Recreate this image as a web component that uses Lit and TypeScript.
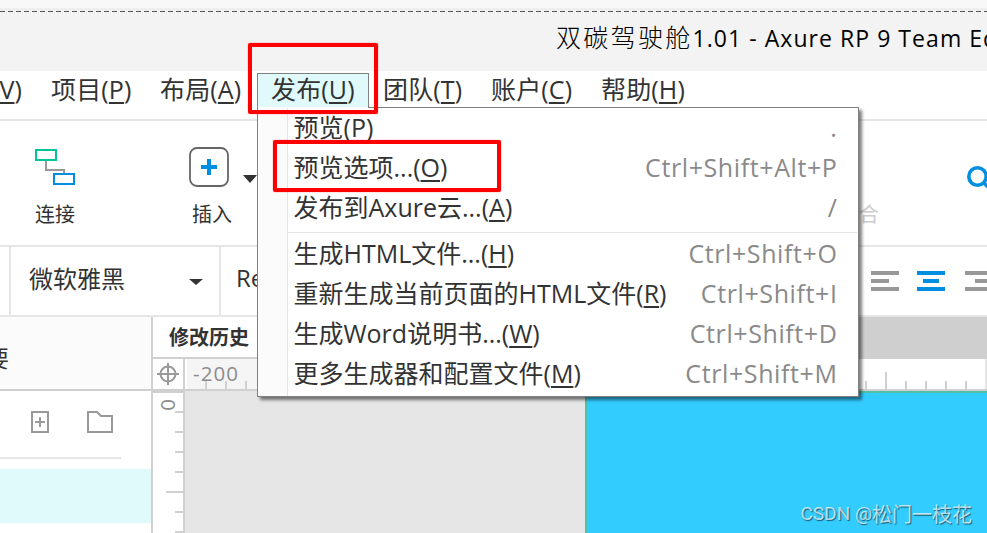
import { LitElement, html, css, svg } from "lit";
import { customElement } from "lit/decorators.js";
import { classMap } from "lit/directives/class-map.js";

interface Entry {
  label: string;
  key: string;
  shortcut: string;
}

const menuBar = [
  { label: "", key: "V" },
  { label: "项目", key: "P" },
  { label: "布局", key: "A" },
  { label: "发布", key: "U", open: true },
  { label: "团队", key: "T" },
  { label: "账户", key: "C" },
  { label: "帮助", key: "H" },
];

const groups: Entry[][] = [
  [
    { label: "预览", key: "P", shortcut: "." },
    { label: "预览选项...", key: "O", shortcut: "Ctrl+Shift+Alt+P" },
    { label: "发布到Axure云...", key: "A", shortcut: "/" },
  ],
  [
    { label: "生成HTML文件...", key: "H", shortcut: "Ctrl+Shift+O" },
    { label: "重新生成当前页面的HTML文件", key: "R", shortcut: "Ctrl+Shift+I" },
    { label: "生成Word说明书...", key: "W", shortcut: "Ctrl+Shift+D" },
    { label: "更多生成器和配置文件", key: "M", shortcut: "Ctrl+Shift+M" },
  ],
];

@customElement("publish-menu")
export class PublishMenu extends LitElement {
  static styles = css`
    :host {
      display: block;
      box-sizing: border-box;
      width: 602px;
      height: 290px;
      border: 1px solid #808080;
      background: linear-gradient(to right, #fbfbfb 29px, #e5e5e5 29px, #e5e5e5 30px, #fff 30px);
      box-shadow: 3px 3px 3px rgba(0, 0, 0, 0.5);
      padding-top: 1px;
      color: #333;
      font: 25px/36px "Open Sans", "Noto Sans CJK SC", sans-serif;
    }
    .row {
      display: flex;
      justify-content: space-between;
      height: 40px;
      padding: 0 21px 0 35.5px;
      white-space: pre;
    }
    .key {
      text-decoration: underline 2px;
      text-underline-offset: 3px;
    }
    .shortcut {
      color: #8a8a8a;
      letter-spacing: 0.6px;
      margin-right: -0.5px;
    }
    .separator {
      height: 1px;
      background: #e5e5e5;
      margin: 3px 1px 2px 30px;
    }
  `;
  render() {
    return groups.map(
      (g, i) => html`${i ? html`<div class="separator"></div>` : ""}
      ${g.map(
        (e) => html`<div class="row">
          <span>${e.label}(<span class="key">${e.key}</span>)</span><span class="shortcut">${e.shortcut}</span>
        </div>`
      )}`
    );
  }
}

@customElement("app-root")
export class AppRoot extends LitElement {
  static styles = css`
    :host {
      display: flex;
      flex-direction: column;
      position: relative;
      width: 987px;
      height: 533px;
      overflow: hidden;
      background: #fff;
      color: #333;
      white-space: nowrap;
      font-family: "Open Sans", "Noto Sans CJK SC", sans-serif;
    }
    * { box-sizing: border-box; }
    svg { display: block; }
    .strip {
      flex: none;
      height: 12px;
      background:
        repeating-linear-gradient(to right, #555 0 5px, #f3f3f3 5px 8px) 0 11px / 100% 1px no-repeat,
        linear-gradient(#f8f8f8 8px, #e9e9e9 9px, #f3f3f3 11px);
    }
    .title {
      flex: none;
      height: 59px;
      padding-left: 556px;
      background: #f3f3f3;
      color: #000;
      font-size: 23px;
      line-height: 51px;
      letter-spacing: 1.05px;
    }
    .title .name {
      font-size: 25px;
      font-weight: 300;
      letter-spacing: 2.3px;
    }
    .menubar {
      flex: none;
      display: grid;
      grid-template-columns: 61px 109px 107px 112px 108px 110px 120px;
      height: 50px;
      margin-left: -20px;
      padding-top: 2px;
      border-bottom: 2px solid #e6e6e6;
      font-size: 25px;
      line-height: 32px;
      letter-spacing: 0.15px;
    }
    .menu-item { height: 35px; padding-left: 14px; }
    .menu-item:first-child { text-align: right; padding: 0 19px 0 0; }
    .menu-item:nth-child(2) { padding-left: 10px; }
    .menu-item:nth-child(3) { padding-left: 10px; }
    .menu-item.open {
      border: 1px solid #808080;
      border-bottom: 0;
      background: #e0fafb;
      padding-left: 13px;
      line-height: 30px;
    }
    .key {
      text-decoration: underline 2px;
      text-underline-offset: 3px;
    }
    .toolbar {
      flex: none;
      display: flex;
      height: 126px;
      border-bottom: 2px solid #e6e6e6;
      padding: 26px 0 0 35px;
      font-size: 20px;
    }
    .tool { display: flex; flex-direction: column; }
    .tool .label { line-height: 28px; margin-top: 13.5px; }
    .connect { width: 154px; flex: none; }
    .insert { width: 54px; flex: none; }
    .insert .label { padding-left: 3px; }
    .drop { margin-top: 28px; flex: none; }
    .muted { color: #ccc; margin: 53.5px 0 0 602px; line-height: 28px; flex: none; }
    .search { margin: 17px 0 0 88px; flex: none; }
    .format {
      flex: none;
      display: flex;
      align-items: center;
      height: 70px;
      border-bottom: 2px solid #e6e6e6;
      padding-left: 9px;
      font-size: 24px;
    }
    .font {
      display: flex;
      align-items: center;
      justify-content: space-between;
      width: 212px;
      height: 68px;
      padding: 0 16px 7px 18px;
      border: solid #e6e6e6;
      border-width: 0 2px;
    }
    .font svg { margin-top: 9px; }
    .weight { width: 650px; padding: 0 0 7px 15px; }
    .work { flex: 1; display: flex; min-height: 0; }
    .side { width: 153px; flex: none; border-right: 2px solid #d0d0d0; }
    .side-head {
      height: 74px;
      border-bottom: 2px solid #d0d0d0;
      background: #fbfbfb;
      font-size: 23px;
      line-height: 82px;
      text-indent: -14px;
    }
    .side-tools {
      display: flex;
      gap: 37px;
      width: 121px;
      height: 68px;
      border-bottom: 2px solid #e6e6e6;
      padding: 19px 0 0 30px;
    }
    .selected { height: 54px; margin-top: 10px; background: #e0fafb; }
    .main { flex: 1; display: flex; flex-direction: column; min-width: 0; }
    .tabs { flex: none; height: 42px; background: #cfcfcf; border-bottom: 2px solid #d0d0d0; }
    .tab {
      width: 150px;
      height: 40px;
      background: #fff;
      padding-left: 16px;
      font-weight: 700;
      font-size: 20px;
      line-height: 42px;
    }
    .ruler-row { display: flex; flex: none; height: 32px; border-bottom: 2px solid #d0d0d0; }
    .corner { width: 32px; border-right: 2px solid #d0d0d0; padding: 4px 0 0 4px; }
    .ruler-top { flex: none; }
    .ruler-end { flex: 1; background: #e6e6e6; }
    .canvas-row { flex: 1; display: flex; min-height: 0; }
    .ruler-left { width: 32px; border: solid #d0d0d0; border-width: 2px 2px 0 0; }
    .canvas { flex: 1; padding-left: 400px; background: #e6e6e6; }
    .page {
      display: flex;
      align-items: flex-end;
      justify-content: flex-end;
      height: 100%;
      border: solid #50c0a8;
      border-width: 2px 0 0 2px;
      background: #3cf;
      padding: 0 15px 5px 0;
      color: rgba(255, 255, 255, 0.7);
      font: 20px/28px "Noto Sans CJK SC", sans-serif;
      text-shadow: 1px 1px 1px rgba(0, 0, 0, 0.55);
    }
    .latin { font-family: Roboto, sans-serif; font-size: 19px; white-space: pre; }
    publish-menu { position: absolute; left: 257px; top: 107px; }
    .bridge {
      position: absolute;
      left: 258px;
      top: 105px;
      width: 110px;
      height: 3px;
      background: linear-gradient(#e0fafb 2px, #fff 2px);
    }
    .mark {
      position: absolute;
      border: 4px solid #f00;
      border-radius: 2px;
      box-shadow: 0 0 1px #f00;
    }
    .mark-tab { left: 248px; top: 43px; width: 130px; height: 71px; }
    .mark-item { left: 273px; top: 140px; width: 228px; height: 52px; }
    .ruler-text { font-size: 20.5px; fill: #8c8c8c; }
  `;

  private align(x: number, w: number) {
    return svg`<path d="M${x} 0h28v4h-28zM${x + (28 - w) / 2} 8h${w}v4h-${w}zM${x} 16h28v4h-28z" fill="#008fe0"/>`;
  }

  render() {
    const topTicks = [...Array(39).keys()].map((i) => 20 + i * 20);
    const leftTicks = [...Array(7).keys()].map((i) => 18 + i * 20);
    return html`
      <div class="strip"></div>
      <header class="title"><span class="name">双碳驾驶舱</span>1.01 - Axure RP 9 Team Edition</header>
      <nav class="menubar">
        ${menuBar.map(
          (m) => html`<div class=${classMap({ "menu-item": true, open: !!m.open })}><span>${m.label}(<span class="key">${m.key}</span>)</span></div>`
        )}
      </nav>
      <section class="toolbar">
        <div class="tool connect">
          <svg width="40" height="40" fill="none" stroke-width="2">
            <path d="M11 14v9h18v5" stroke="#999" />
            <rect x="1" y="3" width="20" height="10" stroke="#00c49a" />
            <rect x="19" y="27" width="20" height="10" stroke="#008fe0" />
          </svg>
          <span class="label">连接</span>
        </div>
        <div class="tool insert">
          <svg width="40" height="40">
            <rect x="1" y="1" width="38" height="38" rx="7" fill="#fff" stroke="#666" stroke-width="1.8" />
            <path d="M12 20h16M20 12v16" stroke="#008fe0" stroke-width="4" />
          </svg>
          <span class="label">插入</span>
        </div>
        <svg class="drop" width="14" height="8"><path d="M0 0h14l-7 8z" fill="#333" /></svg>
        <span class="muted">合</span>
        <svg class="search" width="24" height="30" fill="none" stroke="#008fe0" stroke-width="3.6">
          <circle cx="10.5" cy="12.5" r="8.7" /><path d="M16 18l9 9" />
        </svg>
      </section>
      <section class="format">
        <div class="font">
          <span>微软雅黑</span>
          <svg width="14" height="6"><path d="M0 0h14l-7 6z" fill="#333" /></svg>
        </div>
        <span class="weight">Regular</span>
        <svg width="116" height="20">
          <path d="M0 0h28v4h-28zM0 8h18v4h-18zM0 16h28v4h-28zM94 0h28v4h-28zM104 8h18v4h-18zM94 16h28v4h-28z" fill="#999" />
          ${this.align(46, 16)}
        </svg>
      </section>
      <section class="work">
        <aside class="side">
          <div class="side-head">要</div>
          <div class="side-tools">
            <svg width="20" height="24" fill="none" stroke="#999" stroke-width="2"><path d="M2 2h16v20H2zM5 12h10M10 7v10" /></svg>
            <svg width="26" height="24" fill="none" stroke="#999" stroke-width="2"><path d="M1 2h9l4 4h11v16H1z" /></svg>
          </div>
          <div class="selected"></div>
        </aside>
        <div class="main">
          <div class="tabs"><div class="tab">修改历史</div></div>
          <div class="ruler-row">
            <div class="corner">
              <svg width="22" height="22" fill="none" stroke="#999" stroke-width="2"><circle cx="11" cy="11" r="7.5" /><path d="M0 11h22M11 0v22" /></svg>
            </div>
            <svg class="ruler-top" width="800" height="30">
              <rect x="2" width="398" height="30" fill="#f5f5f5" />
              <text class="ruler-text" x="8" y="22" textLength="45">-200</text>
              ${topTicks.map((x) => svg`<path d="M${x + 1} ${(x - 700) % 100 ? 22 : 13}V30" stroke="#d0d0d0" stroke-width="2"/>`)}
            </svg>
            <div class="ruler-end"></div>
          </div>
          <div class="canvas-row">
            <div class="ruler-left">
              <svg width="30" height="140">
                <text class="ruler-text" transform="translate(8 6) rotate(90)">0</text>
                ${leftTicks.map((y) => svg`<path d="M${y === 98 ? 13 : 22} ${y + 1}H30" stroke="#d0d0d0" stroke-width="2"/>`)}
              </svg>
            </div>
            <div class="canvas"><div class="page"><span class="latin">CSDN @</span>松门一枝花</div></div>
          </div>
        </div>
      </section>
      <publish-menu></publish-menu>
      <div class="bridge"></div>
      <div class="mark mark-tab"></div>
      <div class="mark mark-item"></div>
    `;
  }
}
